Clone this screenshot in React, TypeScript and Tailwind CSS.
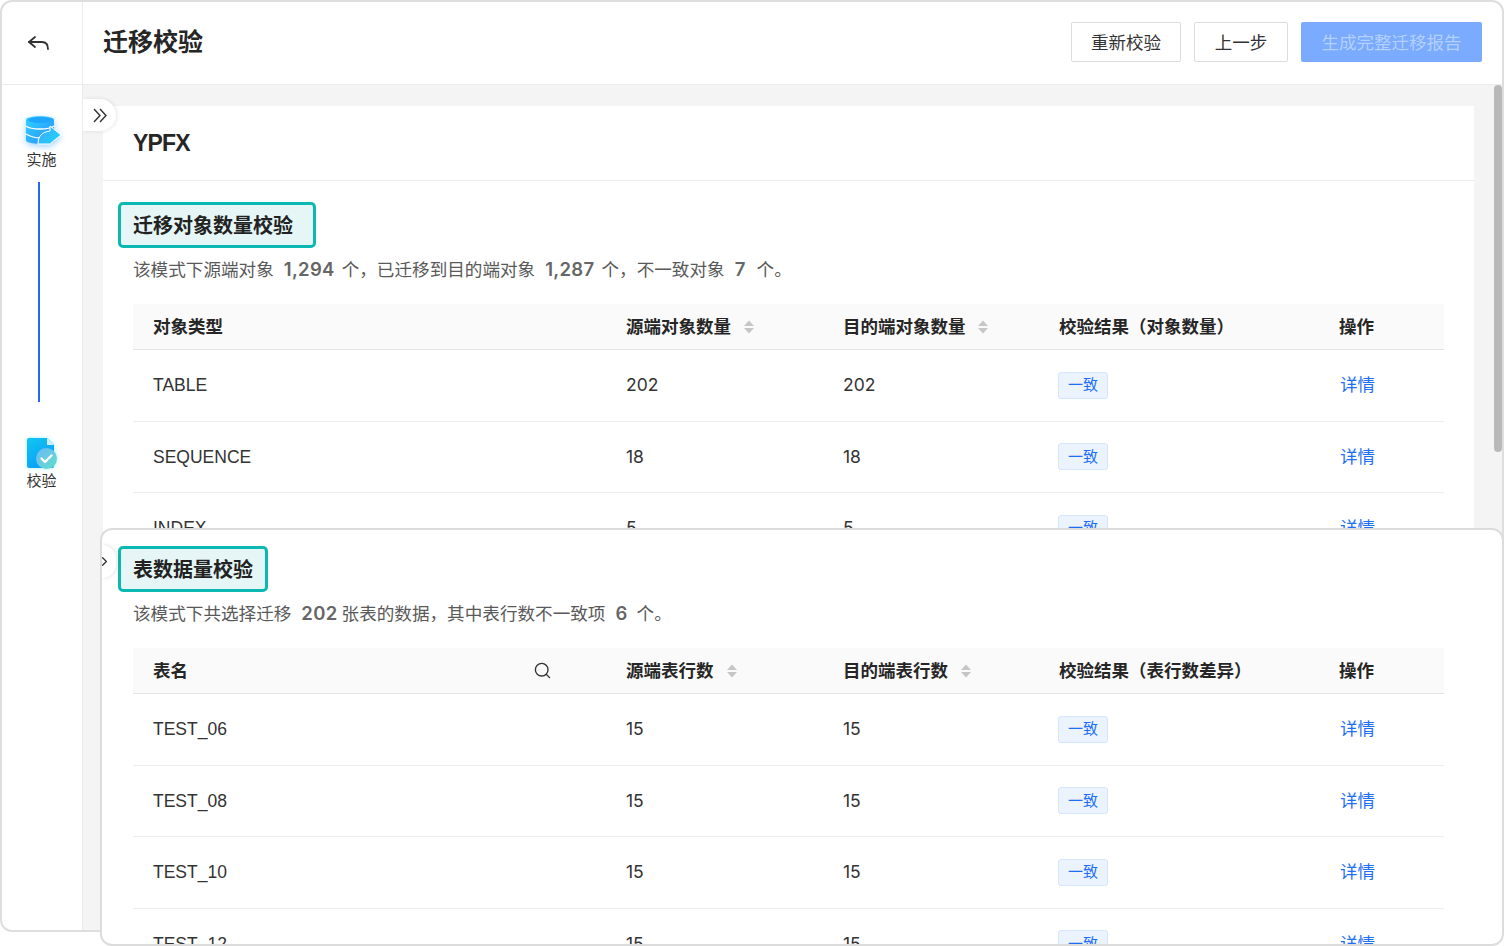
import { ChevronRight, Search } from "lucide-react";

const OBJECT_ROWS = [
  { name: "TABLE", source: "202", target: "202" },
  { name: "SEQUENCE", source: "18", target: "18" },
  { name: "INDEX", source: "5", target: "5" },
];

const TABLE_ROWS = [
  { name: "TEST_06", source: "15", target: "15" },
  { name: "TEST_08", source: "15", target: "15" },
  { name: "TEST_10", source: "15", target: "15" },
  { name: "TEST_12", source: "15", target: "15" },
];

const GRID = "grid grid-cols-[473px_217px_216px_280px_125px]";

function SortIcon() {
  return (
    <svg width="10" height="14" viewBox="0 0 10 14" className="shrink-0">
      <path d="M5 0.5 L10 6 H0 Z" fill="#c6c6c6" />
      <path d="M0 8 H10 L5 13.5 Z" fill="#c6c6c6" />
    </svg>
  );
}

function DbIcon() {
  return (
    <svg width="38" height="34" viewBox="0 0 38 34" className="drop-shadow-[0_2px_3px_rgba(40,150,255,0.45)]">
      <defs>
        <linearGradient id="db" x1="0" y1="0" x2="1" y2="1">
          <stop offset="0" stopColor="#2cd4ff" />
          <stop offset="1" stopColor="#2a8cff" />
        </linearGradient>
        <linearGradient id="arrow" x1="0" y1="0" x2="1" y2="0.6">
          <stop offset="0" stopColor="#3fa4ff" />
          <stop offset="1" stopColor="#22d2fb" />
        </linearGradient>
      </defs>
      <path d="M1 5 C1 0 29 0 29 5 V25 C29 30 1 30 1 25 Z" fill="url(#db)" />
      <ellipse cx="15" cy="5" rx="12" ry="3" fill="#1ea6ff" />
      <path d="M1 11 C6 15 24 15 29 11" stroke="#fff" strokeWidth="1.4" fill="none" />
      <path d="M1 19 C6 22 12 23 16 23" stroke="#fff" strokeWidth="1.4" fill="none" />
      <path d="M13 29 C13 21 17 17 25 16 V11 L36 20 L26 28 V29 Z" fill="url(#arrow)" stroke="#fff" strokeWidth="1" />
    </svg>
  );
}

function CheckFileIcon() {
  return (
    <svg width="32" height="32" viewBox="0 0 32 32" className="drop-shadow-[0_0_2px_rgba(90,225,215,0.5)]">
      <defs>
        <linearGradient id="file" x1="0" y1="0" x2="0.6" y2="1">
          <stop offset="0" stopColor="#10c8f0" />
          <stop offset="1" stopColor="#0a9cf8" />
        </linearGradient>
        <linearGradient id="badge" x1="0" y1="0" x2="1" y2="1">
          <stop offset="0" stopColor="#6fb8f8" />
          <stop offset="1" stopColor="#5fe0c8" />
        </linearGradient>
      </defs>
      <path d="M2 0 H20 L27 7 V28 A2 2 0 0 1 25 30 H2 A2 2 0 0 1 0 28 V2 A2 2 0 0 1 2 0 Z" fill="url(#file)" />
      <path d="M20 0 L27 7 H20 Z" fill="#cfeefd" />
      <circle cx="19.5" cy="20.5" r="10.5" fill="url(#badge)" />
      <path d="M14.5 20.5 L18 24 L24.5 17.5" stroke="#fff" strokeWidth="2.4" fill="none" strokeLinecap="round" strokeLinejoin="round" />
    </svg>
  );
}

function SectionTag({ title, wide }: { title: string; wide?: boolean }) {
  return (
    <div className={`ml-[-15px] w-fit h-[46px] pl-[12px] ${wide ? "pr-[20px]" : "pr-[12px]"} pt-[2px] flex items-center border-[3px] border-[#0cb8b2] rounded-[5px] bg-[#e6f6f6] text-[20px] leading-[28px] font-semibold text-[#222]`}>
      {title}
    </div>
  );
}

function Num({ children, after = "mr-[7px]" }: { children: string; after?: string }) {
  return <span className={`ml-[10px] ${after} font-['Inter',sans-serif] text-[18.5px] tracking-[0.3px] font-semibold text-[#666]`}>{children}</span>;
}

function Desc({ children }: { children: React.ReactNode }) {
  return <p className="mt-[8px] h-[28px] text-[17.6px] leading-[26px] text-[#595959]">{children}</p>;
}

function Rows({ rows }: { rows: { name: string; source: string; target: string }[] }) {
  return (
    <>
      {rows.map((row) => (
        <div key={row.name} className={`${GRID} h-[71.5px] items-center border-b border-[#ececec] text-[17.5px] leading-[24px] text-[#333]`}>
          <div className="pl-[20px]">{row.name}</div>
          <div className="pl-[20px] font-['Inter',sans-serif]">{row.source}</div>
          <div className="pl-[20px] font-['Inter',sans-serif]">{row.target}</div>
          <div className="pl-[19px]">
            <span className="flex items-center justify-center w-[50px] h-[27px] rounded-[3px] border border-[#d6e6ff] bg-[#ebf3ff] text-[15px] leading-[20px] text-[#1e6ff5]">
              一致
            </span>
          </div>
          <div className="pl-[21px] text-[#1e6ff5]">详情</div>
        </div>
      ))}
    </>
  );
}

function HeadCell({ label, gap }: { label: string; gap: string }) {
  return (
    <div className={`pl-[20px] flex items-center ${gap}`}>
      <span>{label}</span>
      <SortIcon />
    </div>
  );
}

export default function App() {
  return (
    <div className="relative w-[1504px] h-[946px] overflow-hidden bg-white font-['Liberation_Sans','Noto_Sans_CJK_SC',sans-serif]">
      <div className="relative w-[1504px] h-[932px] flex flex-col overflow-hidden rounded-[12px] border-2 border-[#dedede] bg-white">
        <header className="flex h-[83px] shrink-0 items-center border-b border-[#ebebeb]">
          <div className="flex h-full w-[81px] shrink-0 items-center justify-center border-r border-[#ebebeb] pr-[7px]">
            <svg width="24" height="16" viewBox="0 0 24 16" fill="none" stroke="#333" strokeWidth="1.8" strokeLinecap="round" strokeLinejoin="round">
              <path d="M8 2 L2 7 L8 12" />
              <path d="M2 7 H15 C19 7 21 10 21 14" />
            </svg>
          </div>
          <h1 className="pl-[20px] pb-[3px] text-[25px] leading-[34px] font-semibold text-[#262626]">迁移校验</h1>
          <div className="ml-auto flex items-center gap-[13px] pr-[20px] pb-[2px] text-[17.5px] leading-[24px]">
            <button className="h-[40px] w-[110px] rounded-[2px] border border-[#dcdcdc] bg-white pt-[1px] text-[#333]">重新校验</button>
            <button className="h-[40px] w-[94px] rounded-[2px] border border-[#dcdcdc] bg-white pt-[1px] text-[#333]">上一步</button>
            <button className="h-[40px] w-[181px] rounded-[2px] bg-[#7aabff] pt-[1px] text-[#b3d0ff]">生成完整迁移报告</button>
          </div>
        </header>

        <div className="flex min-h-0 flex-1">
          <aside className="flex w-[81px] shrink-0 flex-col items-center border-r border-[#ebebeb] pr-[1px]">
            <div className="mt-[30px] ml-[4px]">
              <DbIcon />
            </div>
            <span className="mt-[1px] text-[15px] leading-[20px] text-[#333]">实施</span>
            <div className="mt-[12px] mr-[5px] h-[220px] w-[2px] bg-[#2468f2]" />
            <div className="mt-[36px] ml-[3px]">
              <CheckFileIcon />
            </div>
            <span className="mt-[1px] text-[15px] leading-[20px] text-[#333]">校验</span>
          </aside>

          <main className="relative min-w-0 flex-1 overflow-hidden bg-[#f4f4f4] pl-[20px] pt-[21px]">
            <div className="absolute left-0 top-[14px] z-10 flex h-[32px] w-[33px] items-center justify-center rounded-r-full bg-white shadow-[1px_0_4px_rgba(0,0,0,0.1)]">
              <svg width="14" height="15" viewBox="0 0 14 15" fill="none" stroke="#333" strokeWidth="1.4">
                <path d="M1 1 L7 7.5 L1 14" />
                <path d="M7 1 L13 7.5 L7 14" />
              </svg>
            </div>
            <section className="h-[900px] w-[1371px] bg-white pl-[30px]">
              <div className="ml-[-30px] flex h-[75px] items-center border-b border-[#ececec] pl-[30px] text-[23px] leading-[32px] font-semibold tracking-[-0.8px] text-[#262626]">
                YPFX
              </div>
              <div className="h-[21px]" />
              <SectionTag title="迁移对象数量校验" wide />
              <Desc>
                该模式下源端对象<Num>1,294</Num>个，已迁移到目的端对象<Num>1,287</Num>个，不一致对象<Num after="mr-[11px]">7</Num>个。
              </Desc>
              <div className="mt-[20px] w-[1311px]">
                <div className={`${GRID} h-[46px] items-center border-b border-[#e4e4e4] bg-[#fafafa] text-[17.5px] leading-[24px] font-semibold text-[#262626]`}>
                  <div className="pl-[20px]">对象类型</div>
                  <HeadCell label="源端对象数量" gap="gap-[13px]" />
                  <HeadCell label="目的端对象数量" gap="gap-[12px]" />
                  <div className="pl-[20px]">校验结果（对象数量）</div>
                  <div className="pl-[20px]">操作</div>
                </div>
                <Rows rows={OBJECT_ROWS} />
              </div>
            </section>
          </main>
        </div>

        <div className="absolute right-0 top-[83px] h-[367px] w-[8px] rounded-full bg-[#b9b9b9]" />
      </div>

      {/* second window laid over the first */}
      <div className="absolute left-[100px] top-[528px] z-20 h-[418px] w-[1404px] overflow-hidden rounded-[12px] border-2 border-[#dcdcdc] bg-white pl-[31px] pt-[16px]">
        <div className="absolute left-0 top-[15px] flex h-[33px] w-[14px] items-center justify-start rounded-r-full bg-white shadow-[1px_0_4px_rgba(0,0,0,0.12)]">
          <ChevronRight size={15} strokeWidth={2} color="#333" className="ml-[-5px]" />
        </div>
        <SectionTag title="表数据量校验" />
        <Desc>
          该模式下共选择迁移<Num after="mr-[4px]">202</Num>张表的数据，其中表行数不一致项<Num after="mr-[9px]">6</Num>个。
        </Desc>
        <div className="mt-[20px] w-[1311px]">
          <div className={`${GRID} h-[46px] items-center border-b border-[#e4e4e4] bg-[#fafafa] text-[17.5px] leading-[24px] font-semibold text-[#262626]`}>
            <div className="flex items-center justify-between pl-[20px] pr-[54px]">
              <span>表名</span>
              <Search size={19} strokeWidth={1.7} color="#333" />
            </div>
            <HeadCell label="源端表行数" gap="gap-[13px]" />
            <HeadCell label="目的端表行数" gap="gap-[13px]" />
            <div className="pl-[20px]">校验结果（表行数差异）</div>
            <div className="pl-[20px]">操作</div>
          </div>
          <Rows rows={TABLE_ROWS} />
        </div>
      </div>
    </div>
  );
}
